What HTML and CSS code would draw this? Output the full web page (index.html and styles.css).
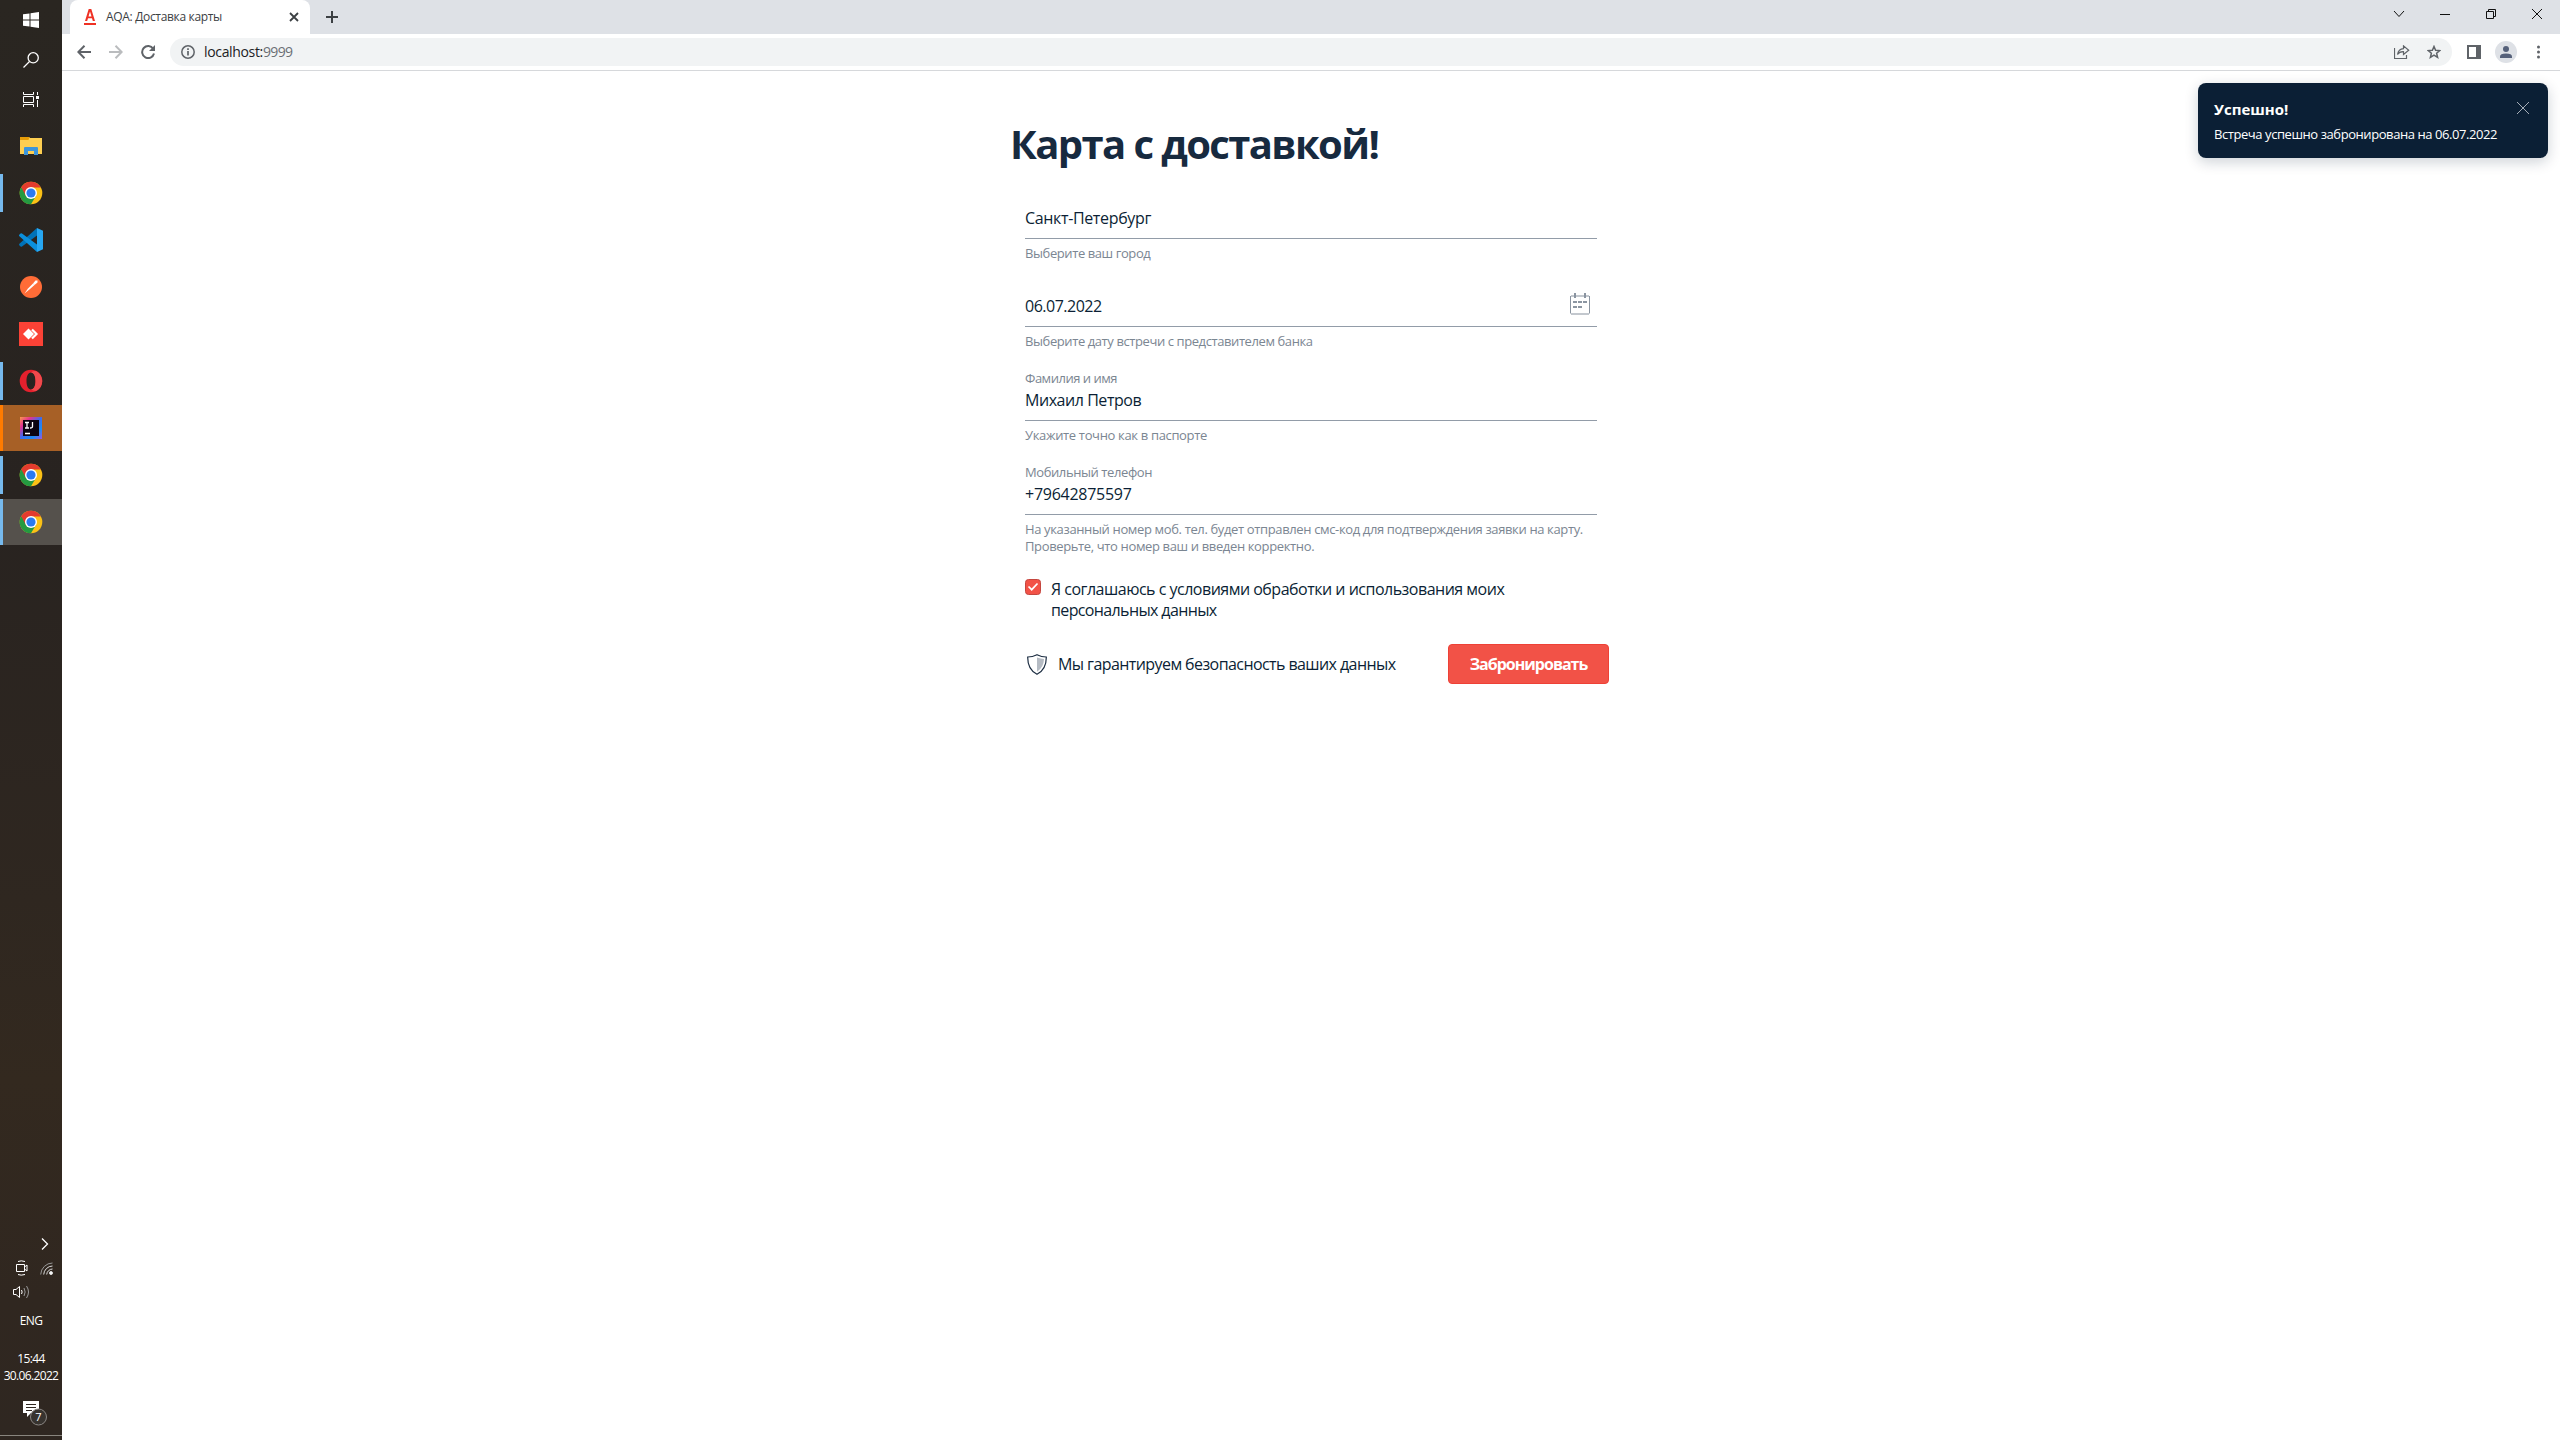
FILE: index.html
```html
<!DOCTYPE html>
<html lang="ru">
<head>
<meta charset="utf-8">
<title>AQA: Доставка карты</title>
<link rel="stylesheet" href="styles.css">
</head>
<body>
<svg width="0" height="0" class="defs">
  <symbol id="chrome" viewBox="0 0 24 24">
    <circle cx="12" cy="12" r="11.3" fill="#fbc116"/>
    <path d="M12 12 L2.2 6.3 A11.3 11.3 0 0 0 12 23.3 L17 14.8 Z" fill="#249a41"/>
    <path d="M2.2 6.3 A11.3 11.3 0 0 1 21.8 6.4 L12 6.4 L7 15 Z" fill="#e33b2e"/>
    <circle cx="12" cy="12" r="6" fill="#fff"/>
    <circle cx="12" cy="12" r="4.6" fill="#2a7af0"/>
  </symbol>
</svg>
<div class="desktop">
  <aside class="taskbar">
    <div class="system">
      <div class="sys"><svg width="16" height="16" viewBox="0 0 16 16" fill="#fff"><path d="M0 2.3 6.5 1.4V7.5H0zM7.5 1.2 16 0V7.5H7.5zM0 8.5H6.5V14.6L0 13.7zM7.5 8.5H16V16L7.5 14.8z"/></svg></div>
      <div class="sys"><svg width="16" height="16" viewBox="0 0 16 16" fill="none" stroke="#fff" stroke-width="1.3"><circle cx="10.2" cy="5.8" r="5.1"/><path d="M6.5 9.5 .5 15.5"/></svg></div>
      <div class="sys"><svg width="16" height="16" viewBox="0 0 16 16" fill="none" stroke="#fff"><path d="M.5 0V2.500H10.500V0M.5 4.500H10.500V10.500H.5zM.5 15V12.500H10.500V15M14.500 0V3M14.500 8V15"/><path d="M13 4h3v3h-3z" fill="#fff" stroke="none"/></svg></div>
    </div>
    <div class="apps">
      <div class="app"><svg width="22" height="18" viewBox="0 0 22 18"><path d="M0 0H9L10 1H22V17H0z" fill="#fdce51"/><path d="M0 0H9.500L8.500 3H0z" fill="#e59c08"/><path d="M4 18V11Q4 10 5 10H17Q18 10 18 11V18H14V14H8V18z" fill="#3c95db"/></svg></div>
      <div class="app open"><svg width="24" height="24"><use href="#chrome"/></svg></div>
      <div class="app"><svg width="24" height="24" viewBox="0 0 24 24"><path d="M18 0V7.500L3 18.400Q2 19 1.200 18.200L.3 17.300Q-.3 16.500.4 15.800z" fill="#0072b8"/><path d="M18 24V16.500L3 5.600Q2 5 1.200 5.800L.3 6.700Q-.3 7.500.4 8.200z" fill="#0b8fdc"/><path d="M18 0 24 2.700V21.300L18 24z" fill="#27a7f2"/></svg></div>
      <div class="app"><svg width="22" height="22" viewBox="0 0 22 22"><circle cx="11" cy="11" r="11" fill="#ff6c37"/><path d="M4.500 17.500 8 12.500 13 7.500 14.500 9 10 13z" fill="#fff"/><path d="M13 7.500 15.500 4.500 17.500 4.500 17.500 6.500 14.500 9z" fill="#fff"/></svg></div>
      <div class="app"><svg width="24" height="24" viewBox="0 0 24 24"><path d="M0 0H24V24H0z" fill="#fb4236"/><path d="M4 12 9.500 6.500 15 12 9.500 17.500z" fill="#fff"/><path d="M13 7.500 17.500 12 13 16.500" fill="none" stroke="#fff" stroke-width="2.200"/></svg></div>
      <div class="app open"><svg width="24" height="24" viewBox="0 0 24 24"><path fill-rule="evenodd" d="M12 .7A11.3 11.3 0 1 0 12 23.300A11.300 11.300 0 1 0 12 .7M12 3.500C15 3.500 16.500 7.500 16.500 12S15 20.500 12 20.500 7.500 16.500 7.500 12 9 3.500 12 3.500" fill="#e5202d"/><path d="M12 3.500Q14.500 1.800 17.500 2.200A11.300 11.300 0 0 1 17.500 21.800Q14.500 22.200 12 20.500C15 20.500 16.500 16.500 16.500 12S15 3.500 12 3.500" fill="#f0494c"/></svg></div>
      <div class="app alert"><svg width="22" height="22" viewBox="0 0 22 22"><defs><linearGradient id="ij" x1="0" y1="0" x2="1" y2="1"><stop offset="0" stop-color="#fb9a4b"/><stop offset=".25" stop-color="#e2338f"/><stop offset=".5" stop-color="#3a6cf0"/><stop offset=".75" stop-color="#1a8cf5"/><stop offset="1" stop-color="#9a55e0"/></linearGradient></defs><path d="M0 0H22V22H0z" fill="url(#ij)"/><path d="M3 3H19V19H3z" fill="#0b0410"/><path d="M5 5.500H9M7 5.500V11M5 11H9M12.500 5V9.500Q12.500 11 10 11M5 16.500H10" stroke="#fff" stroke-width="1.300" fill="none"/></svg></div>
      <div class="app open"><svg width="24" height="24"><use href="#chrome"/></svg></div>
      <div class="app current"><svg width="24" height="24"><use href="#chrome"/></svg></div>
    </div>
    <div class="tray">
      <div class="tray-more"><svg width="8" height="12" viewBox="0 0 8 12" fill="none" stroke="#fff" stroke-width="1.300"><path d="M1 .5 6.500 6 1 11.500"/></svg></div>
      <div class="tray-row"><svg width="12" height="16" viewBox="0 0 12 16" fill="none" stroke="#fff"><path d="M2 1.500Q5 .2 9 1.500M2 14.500Q5 15.800 9 14.500M.5 4.500H8.500V11.500H.5zM8.500 7 11 5V11L8.500 9"/></svg><svg width="13" height="13" viewBox="0 0 13 13" fill="none" stroke="#ddd"><path d="M.7 12.500A12 12 0 0 1 12.500 1" stroke="#999"/><path d="M3.700 12.500A9 9 0 0 1 12.500 4M6.700 12.500A6 6 0 0 1 12.500 7"/><circle cx="11" cy="11" r="1.500" fill="#fff"/></svg></div>
      <div class="tray-row sound"><svg width="17" height="14" viewBox="0 0 17 14" fill="none" stroke="#fff"><path d="M.5 4.500H3L6.500 1.500V12.500L3 9.500H.5zM8.500 5Q9.800 7 8.500 9"/><path d="M11 3Q13.300 7 11 11M13.500 1Q17.500 7 13.500 13" stroke="#999"/></svg></div>
      <div class="lang">ENG</div>
      <div class="clock">15:44<br>30.06.2022</div>
      <div class="notes"><svg width="26" height="26" viewBox="0 0 26 26"><path d="M0 0H16V12H8L4 16V12H0z" fill="#fff"/><path d="M3 3.500H13M3 6.500H13M3 9.500H9" stroke="#302720" stroke-width="1"/><circle cx="15.500" cy="16" r="8" fill="#37332f" stroke="#8a8683"/><text x="15.500" y="20" text-anchor="middle" class="badge">7</text></svg></div>
    </div>
  </aside>
  <main class="browser">
    <header class="tabs">
      <div class="tab">
        <svg width="12" height="16" viewBox="0 0 12 16" fill="#ef3124"><path d="M0 14H12V16H0z"/><path fill-rule="evenodd" d="M4.700 0H7.300L11 12H8.800L8 9.300H4L3.200 12H1zM4.500 7.500H7.500L6 2.500z"/></svg>
        <span class="tab-title">AQA: Доставка карты</span>
        <svg width="10" height="10" viewBox="0 0 10 10" stroke="#3c4043" stroke-width="1.800"><path d="M1 1 9 9M9 1 1 9"/></svg>
      </div>
      <svg class="new-tab" width="12" height="12" viewBox="0 0 12 12" stroke="#3c4043" stroke-width="2"><path d="M6 0V12M0 6H12"/></svg>
      <div class="controls">
        <div><svg width="12" height="8" viewBox="0 0 12 8"><path d="M1 1 6 6.500 11 1"/></svg></div>
        <div><svg width="10" height="10" viewBox="0 0 10 10"><path d="M0 5.500H10"/></svg></div>
        <div><svg width="10" height="10" viewBox="0 0 10 10"><path d="M.5 2.500H7.500V9.500H.5zM2.500 2.500V.5H9.500V7.500H7.500"/></svg></div>
        <div><svg width="10" height="10" viewBox="0 0 10 10"><path d="M0 0 10 10M10 0 0 10"/></svg></div>
      </div>
    </header>
    <nav class="toolbar">
      <div class="tool"><svg width="14" height="14" viewBox="0 0 14 14" stroke="#5f6368"><path d="M14 7H1.500M7.500 .8 1.300 7 7.500 13.200"/></svg></div>
      <div class="tool"><svg width="14" height="14" viewBox="0 0 14 14" stroke="#babcbe"><path d="M0 7H12.500M6.500 .8 12.700 7 6.500 13.200"/></svg></div>
      <div class="tool"><svg width="14" height="14" viewBox="0 0 14 14" stroke="#5f6368"><path d="M12.200 3.800A6 6 0 1 0 13 8.500"/><path d="M14 0V6H8z" fill="#5f6368" stroke="none"/></svg></div>
      <div class="omnibox">
        <svg width="14" height="14" viewBox="0 0 14 14" fill="none" stroke="#5f6368" stroke-width="1.500"><circle cx="7" cy="7" r="6.200"/><path d="M7 6V10.500M7 3.300V4.900" stroke-width="1.700"/></svg>
        <span class="url">localhost:<span class="port">9999</span></span>
        <div class="tool"><svg width="16" height="14" viewBox="0 0 16 14" fill="none" stroke="#5f6368"><path d="M.5 3V13.500H12.500V10" stroke-width="1.200"/><path d="M3.500 9.500Q4.500 4 9.500 3.700V.9L14.700 5.200 9.500 9.500V6.700Q5.500 6.500 3.500 9.500z" stroke-width="1.200"/></svg></div>
        <div class="tool"><svg width="14" height="14" viewBox="0 0 14 14" fill="none" stroke="#5f6368"><path stroke-width="1.500" d="M7 1.500 8.600 5.300 12.800 5.600 9.600 8.300 10.600 12.400 7 10.200 3.400 12.400 4.400 8.300 1.200 5.600 5.400 5.300z"/></svg></div>
      </div>
      <div class="tool"><svg width="14" height="14" viewBox="0 0 14 14"><path d="M0 0H14V14H0zM2 2V12H9V2z" fill="#5f6368" fill-rule="evenodd"/></svg></div>
      <div class="tool"><svg width="22" height="22" viewBox="0 0 22 22"><circle cx="11" cy="11" r="11" fill="#dee1e6"/><circle cx="11" cy="8" r="3" fill="#56617a"/><path d="M5 17V15.500Q5 12.500 11 12.500T17 15.500V17z" fill="#56617a"/></svg></div>
      <div class="tool"><svg width="4" height="14" viewBox="0 0 4 14" fill="#5f6368"><circle cx="2.500" cy="2" r="1.500"/><circle cx="2.500" cy="7" r="1.500"/><circle cx="2.500" cy="12" r="1.500"/></svg></div>
    </nav>
    <section class="page">
      <form class="form">
        <h1 class="title">Карта с доставкой!</h1>
        <div class="field city">
          <div class="input">Санкт-Петербург</div>
          <div class="hint">Выберите ваш город</div>
        </div>
        <div class="field date">
          <div class="input"><span class="number">06.07.2022</span>
            <svg width="20" height="22" viewBox="0 0 20 22" fill="none"><path d="M.5 3V20.500M19.500 3V20.500" stroke="#8b95a1"/><path d="M1 3H19M1 21H19" stroke="#c3c8ce" stroke-width="2"/><path d="M5 0V5M15 0V5" stroke="#8b95a1" stroke-width="2"/><path d="M3 9H17M3 14H12" stroke="#8b95a1" stroke-width="2" stroke-dasharray="4 1"/></svg>
          </div>
          <div class="hint">Выберите дату встречи с представителем банка</div>
        </div>
        <div class="field">
          <div class="label name">Фамилия и имя</div>
          <div class="input name">Михаил Петров</div>
          <div class="hint passport">Укажите точно как в паспорте</div>
        </div>
        <div class="field">
          <div class="label">Мобильный телефон</div>
          <div class="input phone">+79642875597</div>
          <div class="hint long">На указанный номер моб. тел. будет отправлен смс-код для подтверждения заявки на карту.<br>Проверьте, что номер ваш и введен корректно.</div>
        </div>
        <div class="agree">
          <svg width="16" height="16" viewBox="0 0 16 16"><rect x=".5" y=".5" width="15" height="15" rx="3" fill="#f25247" stroke="#c4463f"/><path d="M3.500 7.500 6.700 10.700 12.500 4.500" fill="none" stroke="#fff" stroke-width="1.700"/></svg>
          <div>Я соглашаюсь с условиями обработки и использования моих<br><span class="personal">персональных данных</span></div>
        </div>
        <div class="footer">
          <svg width="20" height="21" viewBox="0 0 20 21"><path d="M10 .7Q5.500 3 .7 3Q.5 15.500 10 20.300Q19.500 15.500 19.300 3Q14.500 3 10 .7z" fill="#fff" stroke="#1c2d42" stroke-width="1.200"/><path d="M10 3.500Q14 4.800 17 5Q16.700 13.500 10 17.800z" fill="#b5bbc3"/></svg>
          <div class="safe">Мы гарантируем безопасность ваших данных</div>
          <div class="button">Забронировать</div>
        </div>
      </form>
      <div class="toast">
        <div>
          <div class="toast-title">Успешно!</div>
          <div class="toast-text">Встреча успешно забронирована на 06.07.2022</div>
        </div>
        <svg width="14" height="14" viewBox="0 0 14 14" stroke="#a5adb7" stroke-width="1"><path d="M1 1 13 13M13 1 1 13"/></svg>
      </div>
    </section>
  </main>
</div>
</body>
</html>
```
FILE: styles.css
```css
* { box-sizing: border-box; }
body { margin: 0; background: #fff; color: #0b1f35; font-family: "Open Sans", "Noto Sans", sans-serif; white-space: nowrap; }
svg { display: block; flex: none; }
.defs { position: absolute; }
.desktop { display: grid; grid-template-columns: 62px 1fr; width: 2560px; height: 1440px; overflow: hidden; }

.taskbar { display: flex; flex-direction: column; color: #fff; background: linear-gradient(#2a2621 0, #282320 500px, #2f2720 900px, #33291f 1080px, #302720 1300px, #2f2721 100%); }
.system { height: 123px; }
.sys { display: flex; align-items: center; justify-content: center; height: 40px; }
.apps { display: grid; grid-auto-rows: 46px; row-gap: 1px; }
.app { display: grid; grid-template-columns: 3px 1fr 3px; align-items: center; justify-items: center; }
.app::before { content: ""; width: 3px; height: 38px; }
.app.open::before { background: #76b9ed; }
.app.alert { background: #a76026; }
.app.alert::before { height: 46px; background: #ff7b00; }
.app.current { background: #55514c; }
.app.current::before { height: 46px; background: #76b9ed; }
.tray { display: flex; flex-direction: column; height: 204px; margin-top: auto; padding-top: 2px; border-bottom: 1px solid #89857e; margin-bottom: 4px; font-size: 12px; line-height: 17px; text-align: center; }
.tray-more { display: flex; justify-content: flex-end; padding: 4px 13px 0 0; height: 24px; }
.tray-row { display: flex; align-items: center; justify-content: space-between; padding: 0 9px 0 16px; height: 20px; }
.tray-row.sound { padding-left: 13px; height: 28px; }
.lang { margin-top: 6px; letter-spacing: -.6px; }
.clock { margin-top: 21px; letter-spacing: -.65px; }
.notes { padding: 17px 0 0 23px; }
.badge { font-size: 11px; fill: #fff; }

.browser { display: flex; flex-direction: column; }
.tabs { display: flex; align-items: center; height: 34px; padding-left: 8px; background: #dee1e6; }
.tab { display: flex; align-items: center; width: 240px; height: 34px; padding: 0 11px 0 14px; border-radius: 8px 8px 0 0; background: #fff; }
.tab-title { flex: 1; margin-left: 10px; font-size: 12px; line-height: 16px; letter-spacing: -.33px; color: #3c4043; }
.new-tab { margin-left: 16px; }
.controls { display: flex; height: 28px; margin: 0 0 6px auto; }
.controls div { display: flex; align-items: center; justify-content: center; width: 46px; }
.controls svg { fill: none; stroke: #111; }
.toolbar { display: flex; align-items: center; height: 37px; padding: 0 6px; border-bottom: 1px solid #d6d8db; }
.tool { display: flex; align-items: center; justify-content: center; width: 32px; }
.toolbar > .tool:nth-child(-n+3) svg { fill: none; stroke-width: 2; }
.omnibox { display: flex; flex: 1; align-items: center; height: 28px; margin: 0 6px; padding: 0 2px 0 11px; border-radius: 14px; background: #f1f3f4; }
.url { flex: 1; margin-left: 9px; font-size: 14px; line-height: 20px; letter-spacing: -.34px; color: #202124; }
.port { letter-spacing: -.63px; color: #6b6f74; }

.page { display: flex; justify-content: space-between; align-items: flex-start; padding: 12px 12px 0 951px; }
.form { width: 596px; padding-top: 37px; font-size: 16px; letter-spacing: -.5px; }
.title { margin: 0 0 38px -3px; font-size: 40px; line-height: 48px; font-weight: 700; letter-spacing: -1.6px; color: #172a3f; }
.field { width: 572px; margin: 0 0 21px 12px; }
.city { margin-bottom: 33px; }
.input { display: flex; justify-content: space-between; height: 33px; line-height: 24px; letter-spacing: -.35px; border-bottom: 1px solid #929ca8; }
.input .number { letter-spacing: -.5px; }
.input.name { letter-spacing: -.45px; }
.input.phone { letter-spacing: -.27px; }
.input svg { margin: -1px 7px 0 0; }
.label, .hint { font-size: 13px; line-height: 17px; letter-spacing: -.41px; color: #7b8692; }
.label { margin-bottom: 1px; }
.label.name { letter-spacing: -.48px; }
.hint { margin-top: 6px; margin-bottom: -1px; }
.hint.passport { letter-spacing: -.34px; }
.hint.long { letter-spacing: -.362px; }
.agree { display: flex; gap: 10px; margin: 25px 0 23px 12px; line-height: 21px; }
.agree .personal { letter-spacing: -.63px; }
.footer { display: flex; align-items: center; height: 40px; padding-left: 14px; }
.safe { margin: -1px auto 0 11px; line-height: 20px; letter-spacing: -.58px; }
.button { width: 161px; height: 40px; border: 1px solid #ee4136; border-radius: 4px; background: #f25247; color: #fff; font-weight: 700; line-height: 39px; letter-spacing: -1px; text-align: center; }
.toast { display: flex; justify-content: space-between; width: 350px; height: 75px; padding: 14px 18px 0 16px; border-radius: 8px; background: #0b1f35; box-shadow: 0 4px 14px rgba(11, 31, 53, .2); color: #fff; }
.toast svg { margin-top: 4px; }
.toast-title { font-size: 15px; line-height: 24px; font-weight: 700; }
.toast-text { margin-top: 3px; font-size: 13px; line-height: 20px; letter-spacing: -.43px; }
```
